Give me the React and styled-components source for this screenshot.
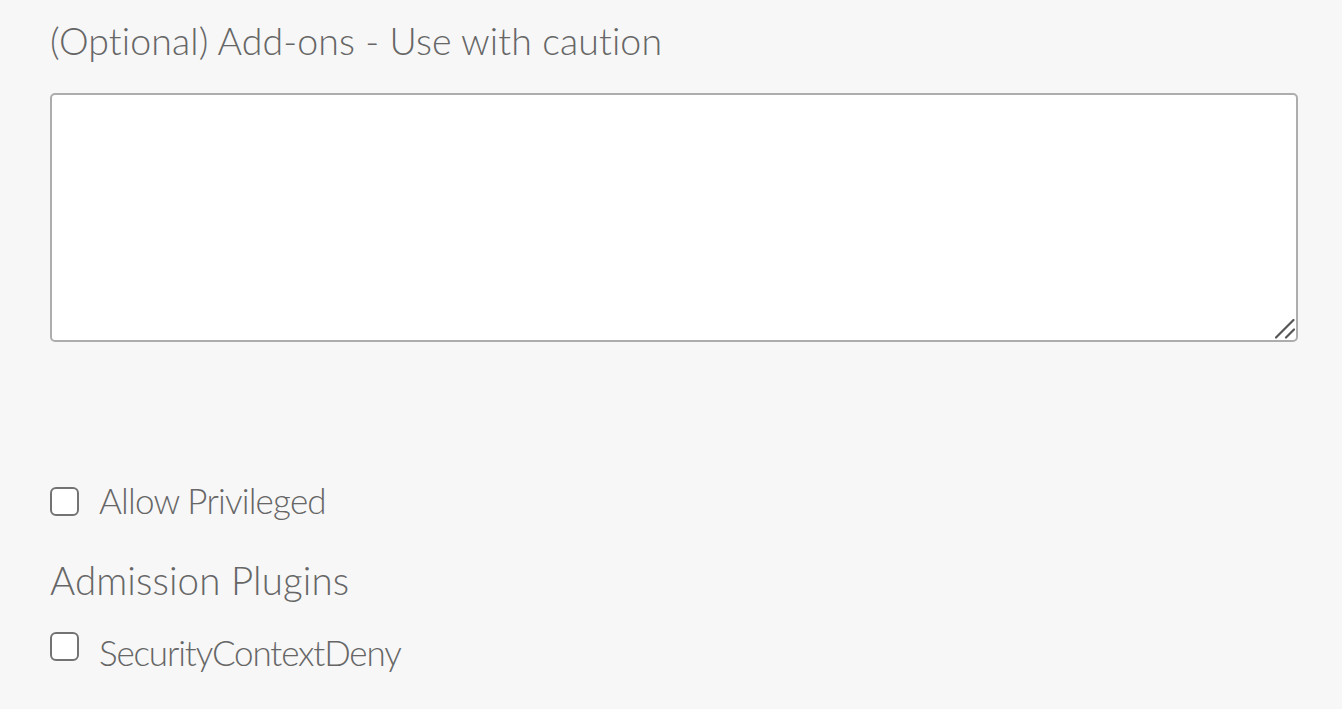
import React from "react";
import styled, { createGlobalStyle } from "styled-components";

const Global = createGlobalStyle`
  html, body { margin: 0; padding: 0; background: #f7f7f7; }
  body { font-family: "Lato", "Open Sans", sans-serif; font-weight: 300; color: #666; }
  * { box-sizing: border-box; }
`;

const Page = styled.div`
  padding: 16px 44px 0 50px;
  min-height: 709px;
  background: #f7f7f7;
`;

const Heading = styled.h3`
  margin: 0;
  font-size: ${(p) => p.$size || 37.5}px;
  font-weight: 300;
  line-height: 50px;
  color: #666;
  letter-spacing: 0.1px;
`;

const AreaWrap = styled.div`
  position: relative;
  margin-top: 27px;
`;

const Area = styled.textarea`
  display: block;
  width: 100%;
  height: 249px;
  border: 2px solid #adadad;
  border-radius: 5px;
  background: #fff;
  resize: none;
  font-family: inherit;
  outline: none;
`;

const Grip = styled.svg`
  position: absolute;
  right: 3px;
  bottom: 3px;
  width: 20px;
  height: 20px;
  pointer-events: none;
`;

const Row = styled.label`
  display: flex;
  align-items: center;
  gap: 20px;
  margin-top: ${(p) => p.$top}px;
  font-size: 35px;
  line-height: 40px;
  color: #666;
`;

const LabelText = styled.span`
  padding: ${(p) => (p.$low ? "11px 0 0" : "0 0 2px")};
  letter-spacing: ${(p) => (p.$low ? "-1.15px" : "-0.8px")};
`;

const Box = styled.span`
  width: 29px;
  height: 29px;
  border: 2.5px solid #737373;
  border-radius: 6px;
  background: #fff;
  flex: none;
`;

const SubHeading = styled(Heading)`
  margin-top: 33px;
`;

export default function App() {
  return (
    <Page>
      <Global />
      <Heading>(Optional) Add-ons - Use with caution</Heading>
      <AreaWrap>
        <Area />
        <Grip viewBox="0 0 20 20">
          <path d="M1 18.5 L18.5 1 M11 18.5 L19 10.5" stroke="#555" strokeWidth="2.2" strokeLinecap="round" fill="none" />
        </Grip>
      </AreaWrap>
      <Row $top={138}>
        <Box />
        <LabelText>Allow Privileged</LabelText>
      </Row>
      <SubHeading $size={38.5}>Admission Plugins</SubHeading>
      <Row $top={16}>
        <Box />
        <LabelText $low>SecurityContextDeny</LabelText>
      </Row>
    </Page>
  );
}
